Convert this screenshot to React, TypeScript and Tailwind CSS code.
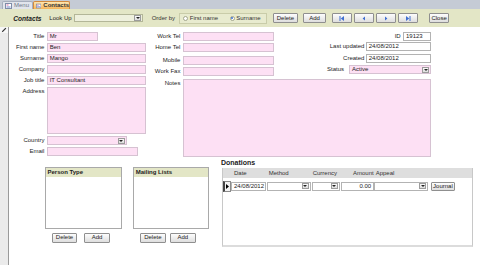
import React from "react";

const pink = "bg-[#fde0f4] border border-[#d6c2d2]";
const white = "bg-white border border-[#b3b3b3]";

function DropBtn() {
  return (
    <span className="my-auto mr-[1px] flex h-[6px] w-[7px] items-center justify-center border border-[#9c9c9c] bg-gradient-to-b from-[#fafafa] to-[#dcdcdc]">
      <svg width="4" height="2" viewBox="0 0 4 2">
        <path d="M0 0h4L2 2z" fill="#222" />
      </svg>
    </span>
  );
}

function Combo({ className, value = "", right = false }: { className: string; value?: string; right?: boolean }) {
  return (
    <div className={`flex h-[9px] ${className}`}>
      <span className={`flex-1 truncate pl-[2px] leading-[7px] ${right ? "text-right" : ""}`}>{value}</span>
      <DropBtn />
    </div>
  );
}

function Label({ text, w, top = false }: { text: string; w: string; top?: boolean }) {
  return (
    <span className={`${w} shrink-0 pr-[2.3px] text-right ${top ? "leading-[8px]" : "leading-[9px]"}`}>
      {text}
    </span>
  );
}

function Input({ className, value = "" }: { className: string; value?: string }) {
  return <div className={`h-[9px] truncate pl-[2px] leading-[7px] ${className}`}>{value}</div>;
}

function Btn({ className, children }: { className: string; children?: React.ReactNode }) {
  return (
    <div
      className={`flex items-center justify-center rounded-[1px] border border-[#8f8f8f] bg-gradient-to-b from-[#fdfdfd] to-[#dedede] text-[#222] ${className}`}
    >
      {children}
    </div>
  );
}

function TabIcon() {
  return (
    <svg width="7" height="6" viewBox="0 0 7 6">
      <rect x="0.5" y="0.5" width="6" height="5" fill="#fff" stroke="#7f8ca8" />
      <rect x="1.5" y="1.5" width="2" height="1" fill="#d56aa5" />
      <rect x="1.5" y="3.5" width="4" height="1" fill="#6d86c8" />
    </svg>
  );
}

function NavIcon({ kind }: { kind: "first" | "prev" | "next" | "last" }) {
  return (
    <svg width="6" height="5" viewBox="0 0 6 5">
      {kind === "first" && (
        <>
          <rect x="0.5" y="0" width="1" height="5" fill="#3f6fd1" />
          <path d="M5 0v5L1.8 2.5z" fill="#3f6fd1" />
        </>
      )}
      {kind === "prev" && <path d="M4 0.6v3.8L1.6 2.5z" fill="#3f6fd1" />}
      {kind === "next" && <path d="M2 0.6v3.8L4.4 2.5z" fill="#3f6fd1" />}
      {kind === "last" && (
        <>
          <path d="M1 0v5L4.2 2.5z" fill="#3f6fd1" />
          <rect x="4.5" y="0" width="1" height="5" fill="#3f6fd1" />
        </>
      )}
    </svg>
  );
}

function Radio({ on = false }: { on?: boolean }) {
  return (
    <span className="flex h-[5px] w-[5px] items-center justify-center rounded-full border border-[#a3a68c] bg-white">
      {on && <span className="h-[2.4px] w-[2.4px] rounded-full bg-[#3a6fcc]" />}
    </span>
  );
}

export default function App() {
  return (
    <div className="flex h-[265px] w-[480px] flex-col overflow-hidden bg-white font-['Liberation_Sans',Arial,sans-serif] text-[6px] leading-[7px] text-[#1c1c1c]">
      {/* Object tabs */}
      <div className="flex h-[9px] items-end bg-[#c5cbd5] pl-[2px]">
        <div className="flex h-[8px] w-[30.5px] items-center gap-[2.5px] rounded-t-[2px] border border-b-0 border-[#a6aebd] bg-[#e1e5ec] pl-[1.5px] text-[#707888]">
          <TabIcon />
          Menu
        </div>
        <div className="flex h-[8px] w-[37.5px] items-center gap-[2.5px] rounded-t-[2px] border border-b-0 border-[#d28a3e] bg-gradient-to-b from-[#fee6b0] to-[#f5b55a] pl-[2px] font-bold text-[#333]">
          <TabIcon />
          Contacts
        </div>
      </div>

      {/* Form header */}
      <div className="flex h-[18px] items-center bg-[#e3e6c6]">
        <span className="ml-[13.3px] w-[36px] text-[6.6px] font-bold italic">Contacts</span>
        <span className="w-[24.7px]">Look Up</span>
        <div className="flex h-[8px] w-[69.3px] border border-[#b3b698] bg-[#eef0dd]">
          <span className="flex-1" />
          <DropBtn />
        </div>
        <span className="ml-[8.4px] w-[27.6px] text-[#333]">Order by</span>
        <div className="flex h-[11px] w-[87.4px] items-center border border-[#c9cca9] bg-[#e8ebcf] pl-[3px]">
          <Radio />
          <span className="ml-[1.5px] w-[40px] text-[#333]">First name</span>
          <Radio on />
          <span className="ml-[1.5px] text-[#333]">Surname</span>
        </div>
        <Btn className="ml-[6px] h-[10px] w-[25.6px]">Delete</Btn>
        <Btn className="ml-[5px] h-[10px] w-[22.7px]">Add</Btn>
        <Btn className="ml-[5.7px] h-[10px] w-[20px]">
          <NavIcon kind="first" />
        </Btn>
        <Btn className="ml-[2.6px] h-[10px] w-[20px]">
          <NavIcon kind="prev" />
        </Btn>
        <Btn className="ml-[2px] h-[10px] w-[20px]">
          <NavIcon kind="next" />
        </Btn>
        <Btn className="ml-[2px] h-[10px] w-[20px]">
          <NavIcon kind="last" />
        </Btn>
        <Btn className="ml-[10.7px] h-[10px] w-[20.3px]">Close</Btn>
      </div>

      {/* Detail */}
      <div className="flex flex-1">
        <div className="w-[9px] shrink-0 border-r border-[#9a9a9a] bg-[#ebebeb]">
          <div className="flex h-[6px] items-center justify-center bg-[#f7f7f7]">
            <svg width="6" height="6" viewBox="0 0 6 6">
              <path d="M0.8 5.2l0.4-1.3 3.2-3.2 0.9 0.9-3.2 3.2z" fill="#333" />
            </svg>
          </div>
        </div>

        <div className="flex flex-1 flex-col">
          <div className="flex items-start pt-[5px]">
            {/* Column A */}
            <div className="flex w-[137px] shrink-0 flex-col gap-[2px]">
              <div className="flex">
                <Label text="Title" w="w-[37.7px]" />
                <Input className={`w-[51px] ${pink}`} value="Mr" />
              </div>
              <div className="flex">
                <Label text="First name" w="w-[37.7px]" />
                <Input className={`w-[99px] ${pink}`} value="Ben" />
              </div>
              <div className="flex">
                <Label text="Surname" w="w-[37.7px]" />
                <Input className={`w-[99px] ${pink}`} value="Mango" />
              </div>
              <div className="flex">
                <Label text="Company" w="w-[37.7px]" />
                <Input className={`w-[99px] ${pink}`} />
              </div>
              <div className="flex">
                <Label text="Job title" w="w-[37.7px]" />
                <Input className={`w-[99px] ${pink}`} value="IT Consultant" />
              </div>
              <div className="flex">
                <Label text="Address" w="w-[37.7px]" top />
                <div className={`h-[47px] w-[99px] ${pink}`} />
              </div>
              <div className="flex">
                <Label text="Country" w="w-[37.7px]" />
                <Combo className={`w-[80px] ${pink}`} />
              </div>
              <div className="flex">
                <Label text="Email" w="w-[37.7px]" />
                <Input className={`w-[91px] ${pink}`} />
              </div>
            </div>

            {/* Columns B and C */}
            <div className="flex w-[285px] shrink-0 flex-col">
              <div className="flex">
                <div className="flex w-[128px] shrink-0 flex-col">
                  <div className="flex">
                    <Label text="Work Tel" w="w-[36.7px]" />
                    <Input className={`w-[91.3px] ${pink}`} />
                  </div>
                  <div className="mt-[2.3px] flex">
                    <Label text="Home Tel" w="w-[36.7px]" />
                    <Input className={`w-[91.3px] ${pink}`} />
                  </div>
                  <div className="mt-[3.4px] flex">
                    <Label text="Mobile" w="w-[36.7px]" />
                    <Input className={`w-[91.3px] ${pink}`} />
                  </div>
                  <div className="mt-[2.3px] flex">
                    <Label text="Work Fax" w="w-[36.7px]" />
                    <Input className={`w-[91.3px] ${pink}`} />
                  </div>
                </div>
                <div className="flex flex-1 flex-col items-end">
                  <div className="flex">
                    <span className="pr-[2.3px] leading-[9px]">ID</span>
                    <Input className={`w-[28px] ${white}`} value="19123" />
                  </div>
                  <div className="mt-[1.3px] flex">
                    <span className="pr-[1.3px] leading-[9px]">Last updated</span>
                    <Input className={`w-[65.3px] ${white}`} value="24/08/2012" />
                  </div>
                  <div className="mt-[3px] flex">
                    <span className="pr-[1.3px] leading-[9px]">Created</span>
                    <Input className={`w-[65.3px] ${white}`} value="24/08/2012" />
                  </div>
                  <div className="mt-[2px] flex">
                    <span className="pr-[5px] leading-[9px]">Status</span>
                    <Combo className={`w-[82px] ${pink}`} value="Active" />
                  </div>
                </div>
              </div>
              <div className="mt-[2.7px] flex">
                <Label text="Notes" w="w-[36.7px]" top />
                <div className={`h-[78.6px] w-[248px] ${pink}`} />
              </div>
            </div>
          </div>

          {/* Lower part */}
          <div className="flex items-start">
            <div className="flex w-[212px] shrink-0 gap-[11.6px] pl-[36px] pt-[10px]">
              <div className="flex flex-col">
                <div className="h-[61.7px] w-[76.7px] border border-[#a9a9a9] bg-white">
                  <div className="h-[9px] bg-[#e3e6c6] pl-[1.5px] leading-[8px] font-bold">Person Type</div>
                </div>
                <div className="mt-[3.7px] flex pl-[6.7px]">
                  <Btn className="h-[10.6px] w-[25.6px]">Delete</Btn>
                  <Btn className="ml-[7px] h-[10.6px] w-[25.7px]">Add</Btn>
                </div>
              </div>
              <div className="flex flex-col">
                <div className="h-[61.7px] w-[76px] border border-[#a9a9a9] bg-white">
                  <div className="h-[9px] bg-[#e3e6c6] pl-[1.5px] leading-[8px] font-bold">Mailing Lists</div>
                </div>
                <div className="mt-[3.7px] flex pl-[6.7px]">
                  <Btn className="h-[10.6px] w-[25.7px]">Delete</Btn>
                  <Btn className="ml-[4.3px] h-[10.6px] w-[25.7px]">Add</Btn>
                </div>
              </div>
            </div>

            <div className="flex flex-col pt-[2px]">
              <span className="h-[8px] text-[7px] font-bold leading-[8px] text-[#222]">Donations</span>
              <div className="ml-[1.3px] mt-[1px] flex h-[78.7px] w-[251px] flex-col border-x border-b-[2px] border-x-[#c8c8c8] border-b-[#dcdcdc] bg-white">
                <div className="flex h-[10px] items-center bg-[#dedede] text-[#333]">
                  <span className="w-[8.7px] shrink-0" />
                  <span className="w-[35.7px] shrink-0 pl-[2px]">Date</span>
                  <span className="w-[45px] shrink-0 pl-[1px]">Method</span>
                  <span className="w-[29.3px] shrink-0">Currency</span>
                  <span className="w-[33.3px] shrink-0 pr-[1.6px] text-right">Amount</span>
                  <span className="pl-[0.4px]">Appeal</span>
                </div>
                <div className="mt-[3px] flex h-[10px] items-center">
                  <div className="flex h-[10.5px] w-[7.7px] shrink-0 items-center justify-center border border-l-[2px] border-[#8a8a8a] border-l-[#444] bg-[#f2f2f2]">
                    <svg width="3" height="5" viewBox="0 0 3 5">
                      <path d="M0 0l3 2.5L0 5z" fill="#000" />
                    </svg>
                  </div>
                  <Input className={`w-[34.7px] ${white}`} value="24/08/2012" />
                  <Combo className={`ml-[1px] w-[44px] ${white}`} />
                  <Combo className={`ml-[1px] w-[28.3px] ${white}`} />
                  <div className={`ml-[1px] h-[9px] w-[32.7px] pr-[1.5px] text-right leading-[7px] ${white}`}>0.00</div>
                  <Combo className={`ml-[0.6px] w-[54px] ${white}`} />
                  <Btn className="ml-[2.7px] h-[8.5px] w-[24px]">Journal</Btn>
                </div>
              </div>
            </div>
          </div>
        </div>
      </div>
    </div>
  );
}
